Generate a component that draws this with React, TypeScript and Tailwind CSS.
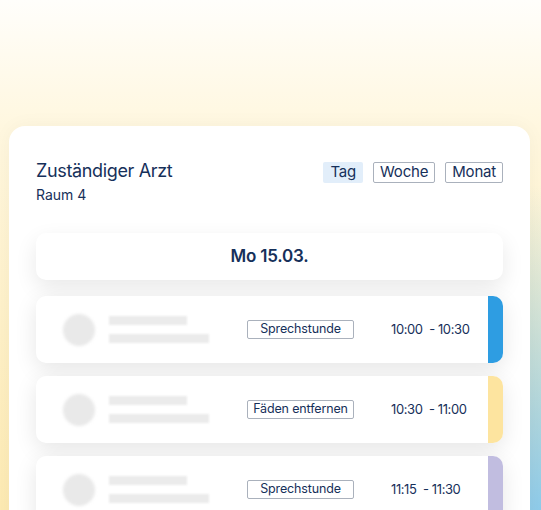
import React from "react";

const font = { fontFamily: "Inter, 'Noto Sans', sans-serif" };

const rows = [
  { label: "Sprechstunde", time: "10:00  - 10:30", bar: "bg-[#2e9de2]" },
  { label: "Fäden entfernen", time: "10:30  - 11:00", bar: "bg-[#fde49f]" },
  { label: "Sprechstunde", time: "11:15  - 11:30", bar: "bg-[#c1bde0]" },
];

function Row({ label, time, bar }: { label: string; time: string; bar: string }) {
  return (
    <div className="flex h-[67px] items-stretch rounded-[10px] bg-white shadow-[0_6px_22px_rgba(0,0,0,0.1)]">
      <div className="flex flex-1 items-center pl-[27px]">
        <div className="h-[32px] w-[32px] rounded-full bg-[#e9e9e9] blur-[1.5px]" />
        <div className="ml-[14px] flex w-[100px] flex-col gap-[9px]">
          <div className="h-[9px] w-[78px] bg-[#ebebeb] blur-[1px]" />
          <div className="h-[9px] w-[100px] bg-[#ebebeb] blur-[1px]" />
        </div>
        <div className="ml-[38px] flex h-[19px] w-[107px] items-center justify-center rounded-[2px] border border-[#aab1bc] text-[12.5px] tracking-[-0.15px] text-[#16305a]">
          {label}
        </div>
        <div className="ml-[37px] whitespace-pre text-[13px] tracking-[-0.4px] text-[#16305a]">{time}</div>
      </div>
      <div className={`w-[15px] rounded-r-[10px] ${bar}`} />
    </div>
  );
}

export default function App() {
  return (
    <div
      style={font}
      className="h-[510px] overflow-hidden bg-[radial-gradient(ellipse_at_100%_100%,#8ecbea_0%,rgba(142,203,234,0)_45%),linear-gradient(to_bottom,#fffefb_0%,#fff7df_25%,#fdeab2_100%)] pl-[9px] pr-[11px] pt-[126px]"
    >
      <div className="h-[420px] rounded-t-[16px] bg-white px-[27px] pt-[33px] shadow-[0_0_20px_rgba(0,0,0,0.04)]">
        <div className="flex items-start justify-between">
          <div className="text-[#16305a]">
            <div className="text-[18px] leading-[24px] tracking-[-0.35px]">Zuständiger Arzt</div>
            <div className="mt-[3px] text-[14px] leading-[18px]">Raum 4</div>
          </div>
          <div className="flex gap-[10px] pt-[3px] text-[15px] tracking-[-0.2px] text-[#16305a]">
            <div className="flex h-[21px] items-center rounded-[2px] bg-[#e2eefa] px-[7px]">Tag</div>
            <div className="flex h-[21px] items-center rounded-[2px] border border-[#aab1bc] px-[6px]">Woche</div>
            <div className="flex h-[21px] items-center rounded-[2px] border border-[#aab1bc] px-[6px]">Monat</div>
          </div>
        </div>

        <div className="mt-[29px] flex h-[47px] items-center justify-center rounded-[10px] bg-white text-[17px] font-semibold tracking-[-0.2px] text-[#16305a] shadow-[0_8px_22px_rgba(0,0,0,0.09)]">
          Mo 15.03.
        </div>

        <div className="mt-[16px] flex flex-col gap-[13px]">
          {rows.map((r, i) => (
            <Row key={i} {...r} />
          ))}
        </div>
      </div>
    </div>
  );
}
